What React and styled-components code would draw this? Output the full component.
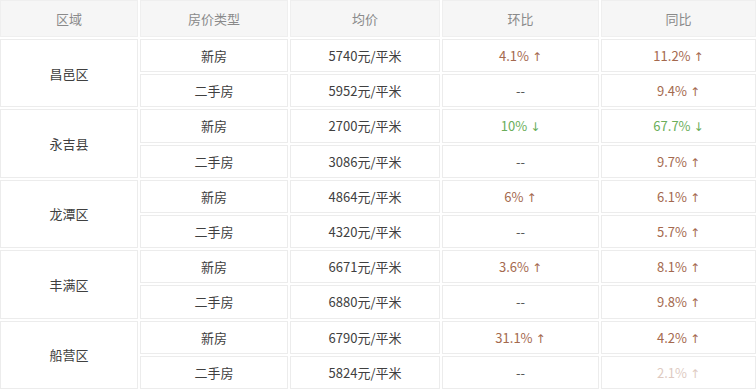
import React from "react";
import styled, { createGlobalStyle } from "styled-components";

const rows = [
  { area: "昌邑区", items: [
    { type: "新房", price: "5740元/平米", hb: "4.1%", hbDir: "up", tb: "11.2%", tbDir: "up" },
    { type: "二手房", price: "5952元/平米", hb: "--", tb: "9.4%", tbDir: "up" },
  ]},
  { area: "永吉县", items: [
    { type: "新房", price: "2700元/平米", hb: "10%", hbDir: "down", tb: "67.7%", tbDir: "down" },
    { type: "二手房", price: "3086元/平米", hb: "--", tb: "9.7%", tbDir: "up" },
  ]},
  { area: "龙潭区", items: [
    { type: "新房", price: "4864元/平米", hb: "6%", hbDir: "up", tb: "6.1%", tbDir: "up" },
    { type: "二手房", price: "4320元/平米", hb: "--", tb: "5.7%", tbDir: "up" },
  ]},
  { area: "丰满区", items: [
    { type: "新房", price: "6671元/平米", hb: "3.6%", hbDir: "up", tb: "8.1%", tbDir: "up" },
    { type: "二手房", price: "6880元/平米", hb: "--", tb: "9.8%", tbDir: "up" },
  ]},
  { area: "船营区", items: [
    { type: "新房", price: "6790元/平米", hb: "31.1%", hbDir: "up", tb: "4.2%", tbDir: "up" },
    { type: "二手房", price: "5824元/平米", hb: "--", tb: "2.1%", tbDir: "up", faded: true },
  ]},
];

const Global = createGlobalStyle`
  body {
    margin: 0;
    background: #fff;
    font-family: "Noto Sans CJK SC", "Noto Sans", sans-serif;
  }
`;

const Table = styled.div`
  display: grid;
  grid-template-columns: 138px 148px 150px 157px 1fr;
  grid-template-rows: 37px repeat(10, 1fr);
  gap: 2px;
  width: 756px;
  height: 389px;
  font-size: 13px;
`;

const Cell = styled.div`
  display: flex;
  align-items: center;
  justify-content: center;
  border: 1px solid #ececec;
  background: #fff;
  color: #404040;
  grid-row: ${(p) => (p.$span ? `span ${p.$span}` : "auto")};
`;

const HeadCell = styled(Cell)`
  background: #f6f6f6;
  border-color: #efefef;
  color: #8a8a8a;
`;

const Change = styled.span`
  color: ${(p) => (p.$dir === "down" ? "#6aae5a" : p.$dir === "up" ? "#a4694e" : "#555")};
  opacity: ${(p) => (p.$faded ? 0.35 : 1)};
`;

const Arrow = styled.span`
  margin-left: 3px;
  font-family: "DejaVu Sans", sans-serif;
  font-size: 12px;
`;

const Rate = ({ value, dir, faded }) => (
  <Change $dir={value === "--" ? null : dir} $faded={faded}>
    {value}
    {value !== "--" && <Arrow>{dir === "down" ? "↓" : "↑"}</Arrow>}
  </Change>
);

const App = () => {
  return (
    <>
      <Global />
      <Table>
        <HeadCell>区域</HeadCell>
        <HeadCell>房价类型</HeadCell>
        <HeadCell>均价</HeadCell>
        <HeadCell>环比</HeadCell>
        <HeadCell>同比</HeadCell>
        {rows.map((r) => (
          <React.Fragment key={r.area}>
            <Cell $span={r.items.length}>{r.area}</Cell>
            {r.items.map((it, i) => (
              <React.Fragment key={i}>
                <Cell>{it.type}</Cell>
                <Cell>{it.price}</Cell>
                <Cell><Rate value={it.hb} dir={it.hbDir} /></Cell>
                <Cell><Rate value={it.tb} dir={it.tbDir} faded={it.faded} /></Cell>
              </React.Fragment>
            ))}
          </React.Fragment>
        ))}
      </Table>
    </>
  );
};

export default App;
